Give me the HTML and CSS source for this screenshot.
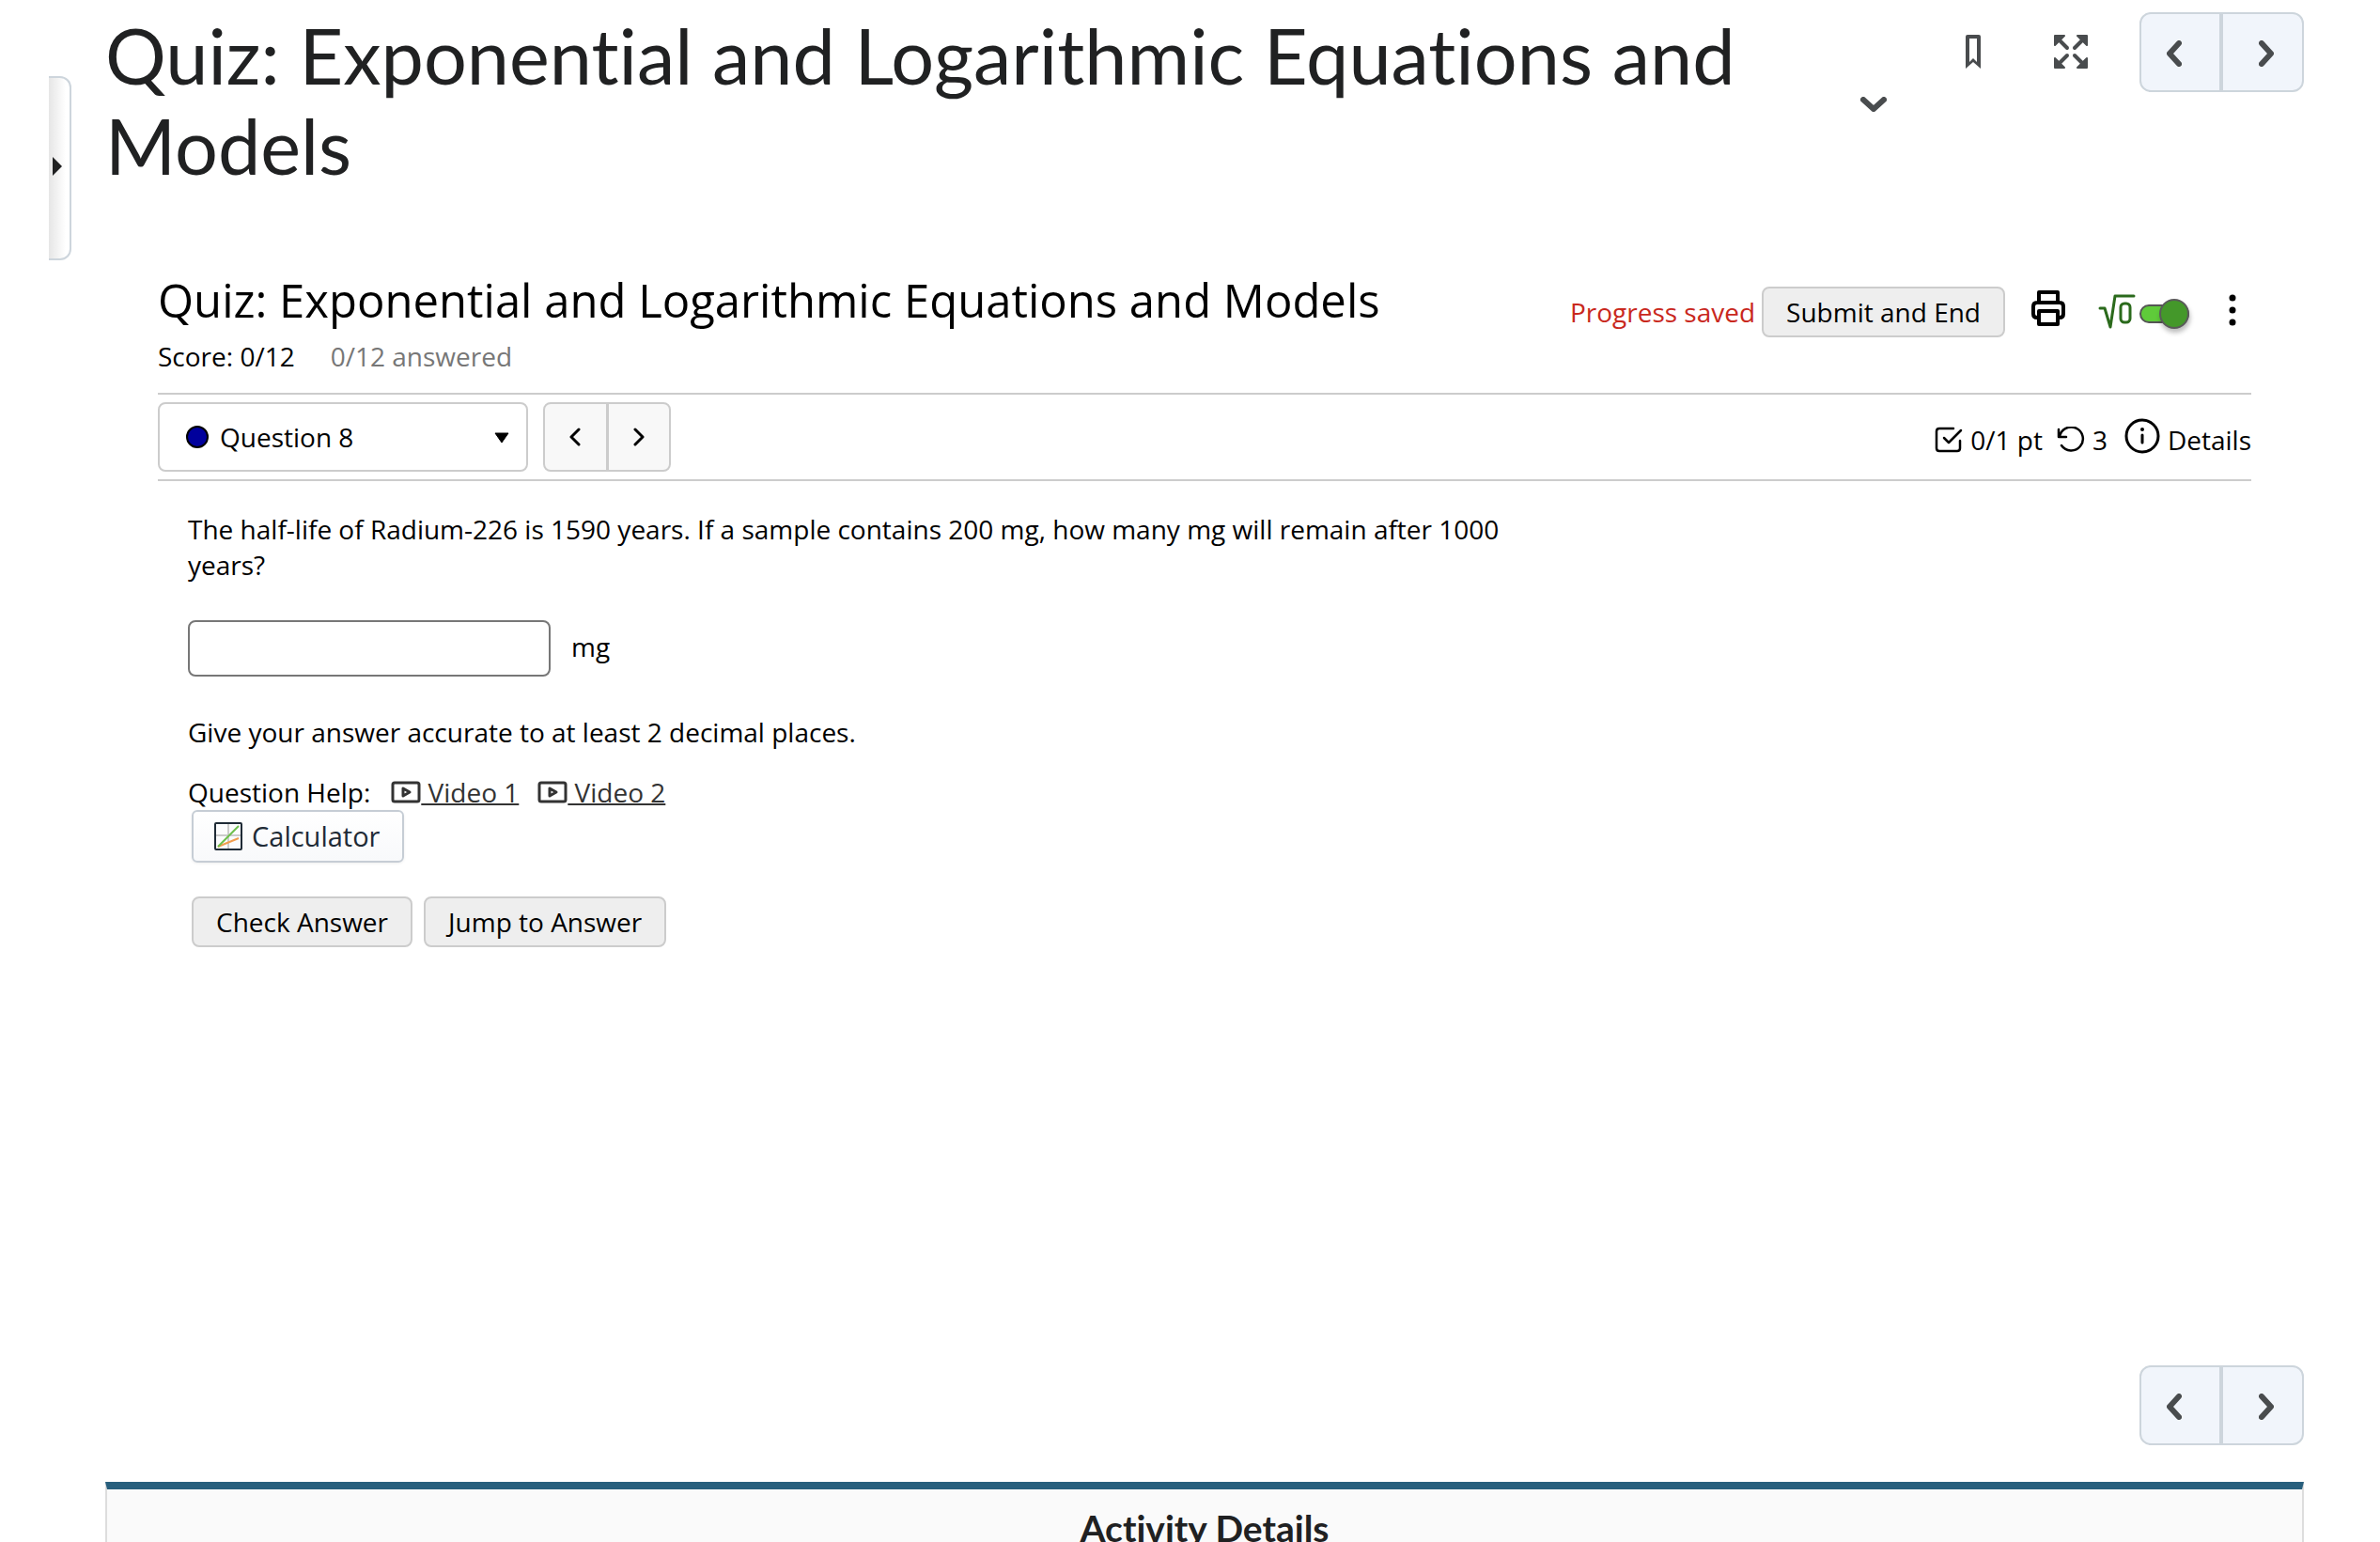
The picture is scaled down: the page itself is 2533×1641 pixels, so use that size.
FILE: index.html
```html
<!DOCTYPE html>
<html lang="en">
<head>
<meta charset="utf-8">
<title>Quiz: Exponential and Logarithmic Equations and Models</title>
<link rel="stylesheet" href="styles.css">
</head>
<body>
<button class="side-tab" type="button" aria-label="Open sidebar"><svg width="10" height="20" viewBox="0 0 10 20"><path d="M0 0L10 10L0 20Z" fill="#202122"/></svg></button>
<main class="page">
  <header class="page-header">
    <h1 class="page-title">Quiz: Exponential and Logarithmic Equations and Models</h1>
    <div class="page-tools">
      <button class="tool tool-more" type="button" aria-label="More"><svg width="28" height="16" viewBox="0 0 28 16"><path d="M3 3L14 13L25 3" fill="none" stroke="#494c4e" stroke-width="6" stroke-linecap="round" stroke-linejoin="round"/></svg></button>
      <button class="tool" type="button" aria-label="Bookmark"><svg width="16" height="36" viewBox="0 0 16 36"><path fill="#494c4e" fill-rule="evenodd" d="M2 0H14Q16 0 16 2V36L8 29L0 36V2Q0 0 2 0ZM4 4V29L8 25L12 29V4Z"/></svg></button>
      <button class="tool tool-expand" type="button" aria-label="Full screen"><svg width="36" height="36" viewBox="0 0 36 36"><g fill="#494c4e" stroke="#494c4e" stroke-linecap="round" stroke-linejoin="round"><g id="arrow"><path stroke-width="2" d="M1 1H11L1 11Z"/><path stroke-width="4" d="M5 5L14 14"/></g><use href="#arrow" transform="matrix(-1 0 0 1 36 0)"/><use href="#arrow" transform="matrix(1 0 0 -1 0 36)"/><use href="#arrow" transform="matrix(-1 0 0 -1 36 36)"/></g></svg></button>
      <nav class="pager" aria-label="Topics">
        <button type="button" aria-label="Previous"><svg width="16" height="28" viewBox="0 0 16 28"><path class="chev" d="M13 3L3 14L13 25"/></svg></button>
        <button type="button" aria-label="Next"><svg width="16" height="28" viewBox="0 0 16 28"><path class="chev" d="M3 3L13 14L3 25"/></svg></button>
      </nav>
    </div>
  </header>

  <section class="quiz">
    <header class="quiz-header">
      <div>
        <h2 class="quiz-title">Quiz: Exponential and Logarithmic Equations and Models</h2>
        <p class="score"><span>Score: 0/12</span><span class="answered">0/12 answered</span></p>
      </div>
      <div class="quiz-tools">
        <span class="saved">Progress saved</span>
        <button class="btn" type="button">Submit and End</button>
        <button class="icon-btn print" type="button" aria-label="Print"><svg width="36" height="38" viewBox="0 0 36 38" fill="none" stroke="#000" stroke-width="4" stroke-linejoin="round"><path d="M8 13V2H28V13M8 29H6Q2 29 2 25V17Q2 13 6 13H30Q34 13 34 17V25Q34 29 30 29H28M8 22H28V36H8Z"/></svg></button>
        <label class="math"><svg width="40" height="38" viewBox="0 0 40 38" fill="none" stroke="#2b6a1c" stroke-width="3" stroke-linejoin="round" stroke-linecap="round"><path d="M2 15H7L13 35L18 2H38"/><rect x="24" y="10" width="10" height="20" rx="4"/></svg><input class="toggle" type="checkbox" role="switch" aria-label="Math entry" checked></label>
        <button class="icon-btn" type="button" aria-label="Options"><svg width="8" height="36" viewBox="0 0 8 36"><circle cx="4" cy="5" r="3.5"/><circle cx="4" cy="18" r="3.5"/><circle cx="4" cy="31" r="3.5"/></svg></button>
      </div>
    </header>

    <div class="question-bar">
      <button class="question-select" type="button" aria-haspopup="listbox"><span class="dot"></span><span>Question 8</span><svg class="caret" width="16" height="12" viewBox="0 0 16 12"><path d="M1 2H15L8 12Z" stroke="#000" stroke-linejoin="round"/></svg></button>
      <div class="step">
        <button type="button" aria-label="Previous question"><svg width="12" height="20" viewBox="0 0 12 20"><path class="thin" d="M10 2L2 10L10 18"/></svg></button>
        <button type="button" aria-label="Next question"><svg width="12" height="20" viewBox="0 0 12 20"><path class="thin" d="M2 2L10 10L2 18"/></svg></button>
      </div>
      <div class="facts">
        <span class="fact"><svg width="30" height="28" viewBox="0 0 30 28"><path class="thin fine" d="M20 2H5Q2 2 2 5V23Q2 26 5 26H24Q27 26 27 23V15M10 12L15 17L28 4"/></svg>0/1 pt</span>
        <span class="fact tries"><svg width="30" height="28" viewBox="0 0 30 28"><path class="thin fine" d="M2 3V11H10M3 11A12.5 12.5 0 1 1 5 20"/></svg>3</span>
        <button class="fact details" type="button"><svg class="info" width="38" height="38" viewBox="0 0 38 38"><circle cx="19" cy="19" r="17" fill="none" stroke="#000" stroke-width="3"/><path d="M19 18V26" stroke="#000" stroke-width="3" stroke-linecap="round"/><circle cx="19" cy="12" r="2"/></svg>Details</button>
      </div>
    </div>

    <form class="question">
      <p class="prompt">The half-life of Radium-226 is 1590 years. If a sample contains 200 mg, how many mg will remain after 1000 years?</p>
      <label class="answer"><input type="text"><span>mg</span></label>
      <p>Give your answer accurate to at least 2 decimal places.</p>
      <p class="help">Question Help:
        <a href="#v1"><svg width="32" height="24" viewBox="0 0 32 24"><g fill="none" stroke="#333" stroke-width="3" stroke-linejoin="round"><rect x="2" y="2" width="28" height="20" rx="2"/><path d="M13 8V16L20 12Z"/></g></svg><span>&nbsp;Video 1</span></a>
        <a href="#v2"><svg width="32" height="24" viewBox="0 0 32 24"><g fill="none" stroke="#333" stroke-width="3" stroke-linejoin="round"><rect x="2" y="2" width="28" height="20" rx="2"/><path d="M13 8V16L20 12Z"/></g></svg><span>&nbsp;Video 2</span></a>
      </p>
      <button class="calculator" type="button"><svg width="30" height="30" viewBox="0 0 30 30" fill="none"><path d="M15 1V29M1 14H29" stroke="#ccc" stroke-width="2"/><path d="M4 26L26 17" stroke="#f19d4f" stroke-width="2"/><path d="M4 26L26 4" stroke="#6cbf4b" stroke-width="2"/><rect x="1" y="1" width="28" height="28" rx="1" stroke="#1f2b36" stroke-width="2"/></svg>Calculator</button>
      <div class="actions">
        <button class="btn" type="button">Check Answer</button>
        <button class="btn" type="button">Jump to Answer</button>
      </div>
    </form>
  </section>

  <nav class="pager pager-bottom" aria-label="Topics, bottom">
    <button type="button" aria-label="Previous"><svg width="16" height="28" viewBox="0 0 16 28"><path class="chev" d="M13 3L3 14L13 25"/></svg></button>
    <button type="button" aria-label="Next"><svg width="16" height="28" viewBox="0 0 16 28"><path class="chev" d="M3 3L13 14L3 25"/></svg></button>
  </nav>

  <section class="activity"><h2>Activity Details</h2></section>
</main>
</body>
</html>
```
FILE: styles.css
```css
* { box-sizing: border-box; }
html { overflow: hidden; }
body { margin: 0; background: #fff; color: #000; font: 28px/38px "Open Sans", sans-serif; }
h1, h2, p { margin: 0; font-weight: 400; }
button { margin: 0; padding: 0; border: 0; background: none; color: inherit; font: inherit; cursor: pointer; }
svg { display: block; flex: none; }
.chev { fill: none; stroke: #494c4e; stroke-width: 6; stroke-linecap: round; stroke-linejoin: round; }
.thin { fill: none; stroke: #000; stroke-width: 3; stroke-linecap: round; stroke-linejoin: round; }
.fine { stroke-width: 2.5; }

.side-tab { position: absolute; left: 52px; top: 81px; width: 24px; height: 196px; padding: 0 0 4px 4px; border: 2px solid #cdd5dc; border-left: 0; border-radius: 0 12px 12px 0; background: linear-gradient(to right, #e6e6e6, #fff 18px); }

.page { padding: 13px 81px 0 112px; }
.page-header { display: flex; justify-content: space-between; align-items: flex-start; height: 276px; }
.page-title { max-width: 1780px; margin-top: -2px; color: #202122; font: 400 81px/96px Lato, sans-serif; font-variant-ligatures: none; }
.page-tools { display: flex; align-items: flex-start; }
.tool { margin-top: 24px; }
.tool-more { margin: 90px 84px 0 0; }
.tool-expand { margin: 24px 55px 0 78px; }

.pager { display: flex; width: 175px; height: 85px; border: 2px solid #cdd5dc; border-radius: 12px; background: #f1f5fb; }
.pager button { width: 83px; padding: 2px 0 0 27px; }
.pager button + button { width: 88px; padding-left: 38px; border-left: 4px solid #cdd5dc; }

.quiz { margin: 0 56px; height: 1164px; }
.quiz-header { display: flex; justify-content: space-between; height: 129px; }
.quiz-title { font-size: 49px; line-height: 60px; }
.score { display: flex; gap: 38px; margin-top: 11px; }
.answered { color: #777; }
.quiz-tools { display: flex; align-items: center; height: 54px; margin: 16px 16px 0 0; }
.saved { margin-right: 7px; color: #c9281d; }
.btn { height: 54px; padding: 0 24px; border: 2px solid #ccc; border-radius: 8px; background: #eee; white-space: nowrap; }
.print { margin: 0 35px 4px 28px; }
.math { display: flex; align-items: center; margin-right: 42px; }
.icon-btn svg { margin-bottom: 4px; }
.toggle { appearance: none; position: relative; width: 53px; height: 20px; margin: 4px 0 0 4px; border: 2px solid #555; border-radius: 10px; background: #5fcb3a; }
.toggle::after { content: ""; position: absolute; right: -2px; top: -8px; box-sizing: border-box; width: 32px; height: 32px; border: 2px solid #5a5a5a; border-radius: 50%; background: #44982a; box-shadow: 1px 4px 5px #0004; }

.question-bar { display: flex; align-items: center; height: 94px; border: solid #ccc; border-width: 2px 0; }
.question-select { display: flex; align-items: center; width: 394px; height: 74px; padding: 0 18px 0 28px; border: 2px solid #ccc; border-radius: 8px; }
.dot { width: 24px; height: 24px; margin-right: 12px; border: 2px solid #000; border-radius: 50%; background: #00009c; }
.caret { margin-left: auto; }
.step { display: flex; width: 136px; height: 74px; margin-left: 16px; border: 2px solid #ccc; border-radius: 8px; background: #f8f8f8; }
.step button { flex: 1; display: flex; align-items: center; justify-content: center; }
.step button + button { border-left: 3px solid #ccc; }
.facts { display: flex; align-items: center; margin: 5px 0 0 auto; }
.fact { display: flex; align-items: center; gap: 8px; }
.tries { margin: 0 18px 0 15px; }
.info { margin-bottom: 8px; }

.question { padding: 32px 32px 0; }
.prompt { max-width: 1400px; }
.answer { display: flex; align-items: center; gap: 22px; margin: 40px 0; }
.answer span { padding-bottom: 4px; }
.answer input { width: 386px; height: 60px; padding: 0 12px; border: 2px solid #777; border-radius: 8px; font: inherit; }
.help { display: flex; align-items: center; margin-top: 26px; }
.help a { display: flex; align-items: center; margin-left: 22px; color: #333; text-decoration: none; }
.help a + a { margin-left: 20px; }
.help a span { text-decoration: underline; text-decoration-thickness: 2px; }
.calculator { display: flex; align-items: center; gap: 10px; height: 56px; margin-left: 4px; padding: 0 24px 0 22px; border: 2px solid #c6cdd5; border-radius: 6px; background: linear-gradient(#fff, #f8f9fb); color: #1f2b36; font-size: 29px; box-shadow: 0 1px 3px #0001; }
.actions { display: flex; gap: 12px; margin: 36px 0 0 4px; }

.pager-bottom { margin-left: auto; }
.activity { margin-top: 39px; padding-top: 17px; height: 160px; border: 2px solid #ddd; border-top: 8px solid #285f7d; background: #fafafa; color: #202122; text-align: center; }
.activity h2 { font: 700 39px/48px Lato, sans-serif; font-variant-ligatures: none; }
```
